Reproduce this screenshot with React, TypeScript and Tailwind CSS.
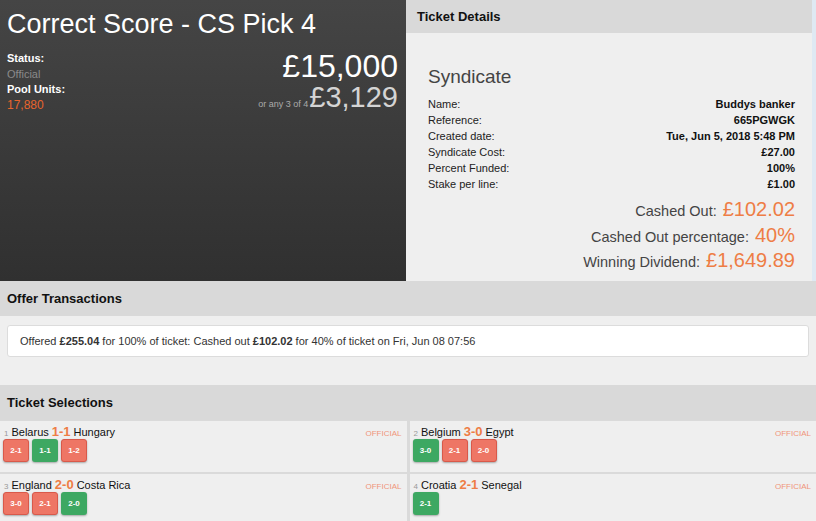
const DETAILS = [
  { label: 'Name:', value: 'Buddys banker' },
  { label: 'Reference:', value: '665PGWGK' },
  { label: 'Created date:', value: 'Tue, Jun 5, 2018 5:48 PM' },
  { label: 'Syndicate Cost:', value: '£27.00' },
  { label: 'Percent Funded:', value: '100%' },
  { label: 'Stake per line:', value: '£1.00' },
]

const RESULTS = [
  { label: 'Cashed Out:', value: '£102.02' },
  { label: 'Cashed Out percentage:', value: '40%' },
  { label: 'Winning Dividend:', value: '£1,649.89' },
]

type Pick = { score: string; win: boolean }

const SELECTIONS: { n: number; home: string; score: string; away: string; picks: Pick[] }[] = [
  {
    n: 1,
    home: 'Belarus',
    score: '1-1',
    away: 'Hungary',
    picks: [
      { score: '2-1', win: false },
      { score: '1-1', win: true },
      { score: '1-2', win: false },
    ],
  },
  {
    n: 2,
    home: 'Belgium',
    score: '3-0',
    away: 'Egypt',
    picks: [
      { score: '3-0', win: true },
      { score: '2-1', win: false },
      { score: '2-0', win: false },
    ],
  },
  {
    n: 3,
    home: 'England',
    score: '2-0',
    away: 'Costa Rica',
    picks: [
      { score: '3-0', win: false },
      { score: '2-1', win: false },
      { score: '2-0', win: true },
    ],
  },
  {
    n: 4,
    home: 'Croatia',
    score: '2-1',
    away: 'Senegal',
    picks: [{ score: '2-1', win: true }],
  },
]

function SectionHeader({ title }: { title: string }) {
  return (
    <div className="h-[35px] bg-[#d9d9d9] flex items-center px-[7px]">
      <h2 className="text-[13px] font-bold text-[#111]">{title}</h2>
    </div>
  )
}

function Selection({ sel }: { sel: (typeof SELECTIONS)[number] }) {
  return (
    <div className="h-[51px] bg-[#efefef] px-[3px] pt-[1px] flex flex-col">
      <div className="flex items-baseline justify-between h-[16px]">
        <p className="text-[11px] text-[#111] flex items-baseline gap-[3px]">
          <span className="text-[8px] text-[#999] pl-[1px]">{sel.n}</span>
          <span>{sel.home}</span>
          <span className="text-[13px] font-bold text-[#ee7d45]">{sel.score}</span>
          <span>{sel.away}</span>
        </p>
        <span className="text-[8px] text-[#f0957a] pr-[2px]">OFFICIAL</span>
      </div>
      <div className="flex gap-[3px] mt-[1px]">
        {sel.picks.map((p) => (
          <span
            key={p.score}
            className={`w-[26px] h-[23px] rounded-[3px] flex items-center justify-center text-[8px] font-bold text-white shadow-[0_1px_2px_rgba(0,0,0,0.3)] ${
              p.win ? 'bg-[#3da862]' : 'bg-[#ee7665] border border-[#d9594a]'
            }`}
          >
            {p.score}
          </span>
        ))}
      </div>
    </div>
  )
}

export default function App() {
  return (
    <main
      className="w-[816px] h-[521px] overflow-hidden bg-[#efefef] text-[#222]"
      style={{ fontFamily: '"Liberation Sans", Arial, sans-serif' }}
    >
      <div className="flex h-[281px]">
        <section className="w-[406px] bg-gradient-to-b from-[#454545] to-[#303030] text-white pl-[7px] pr-[8px] pt-[9px]">
          <h1 className="text-[27px] leading-[30px]">Correct Score - CS Pick 4</h1>
          <div className="flex justify-between mt-[8px]">
            <div className="text-[11px] leading-[15.5px] pt-[4px]">
              <p className="font-bold">Status:</p>
              <p className="text-[#8a8a8a]">Official</p>
              <p className="font-bold">Pool Units:</p>
              <p className="text-[12px] text-[#e8642c]">17,880</p>
            </div>
            <div className="flex flex-col items-end pt-[3px]">
              <p className="text-[32px] leading-[32px]">£15,000</p>
              <p className="flex items-baseline leading-[30px]">
                <span className="text-[9px] text-[#aaa] mr-[1px]">or any 3 of 4</span>
                <span className="text-[29px] text-[#d4d4d4]">£3,129</span>
              </p>
            </div>
          </div>
        </section>
        <section className="flex-1 flex flex-col border-r-[4px] border-[#dfe9f3]">
          <div className="h-[33px] bg-[#d9d9d9] flex items-center px-[11px]">
            <h2 className="text-[13px] font-bold text-[#111]">Ticket Details</h2>
          </div>
          <div className="flex-1 pl-[22px] pr-[17px] pt-[32px]">
            <h3 className="text-[19px] text-[#444] leading-[24px]">Syndicate</h3>
            <dl className="mt-[7px] text-[11px] leading-[16px]">
              {DETAILS.map((d) => (
                <div key={d.label} className="flex justify-between">
                  <dt className="text-[#222]">{d.label}</dt>
                  <dd className="font-bold text-[#111]">{d.value}</dd>
                </div>
              ))}
            </dl>
            <div className="mt-[6px] flex flex-col items-end">
              {RESULTS.map((r) => (
                <p key={r.label} className="flex items-baseline gap-[6px] leading-[23.5px]">
                  <span className="text-[14.5px] text-[#444]">{r.label}</span>
                  <span className="text-[20px] text-[#ee7d45]">{r.value}</span>
                </p>
              ))}
            </div>
          </div>
        </section>
      </div>

      <SectionHeader title="Offer Transactions" />
      <div className="h-[69px] px-[7px] pt-[9px]">
        <div className="h-[32px] bg-white rounded-[3px] border border-[#dcdcdc] flex items-center px-[12px] text-[11px] text-[#333]">
          <p>
            Offered <b>£255.04</b> for 100% of ticket: Cashed out <b>£102.02</b> for 40% of ticket on Fri, Jun 08 07:56
          </p>
        </div>
      </div>

      <SectionHeader title="Ticket Selections" />
      <div className="grid grid-cols-2 gap-x-[3px] gap-y-[2px] bg-[#dadada] border-t border-[#dadada]">
        {SELECTIONS.map((s) => (
          <Selection key={s.n} sel={s} />
        ))}
      </div>
    </main>
  )
}
